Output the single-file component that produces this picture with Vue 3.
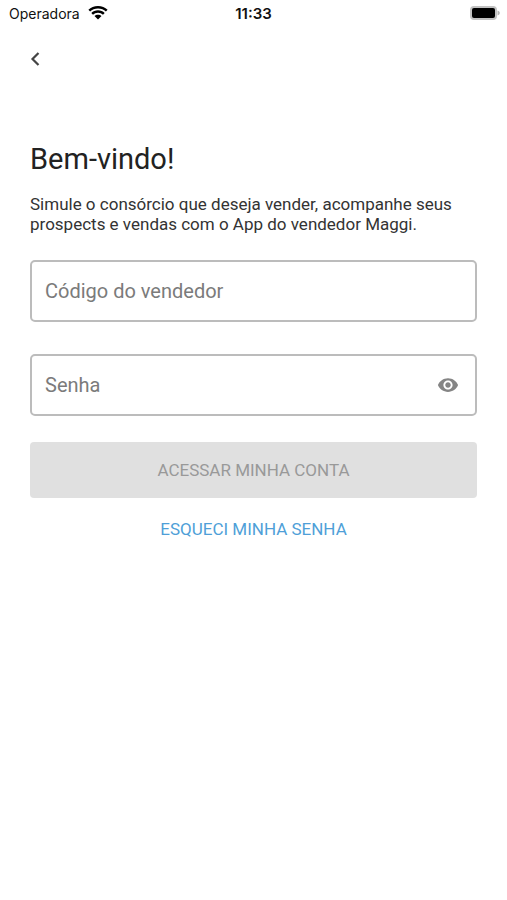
<script setup>
import { ref, computed } from 'vue'

const code = ref('')
const password = ref('')
const visible = ref(false)
const ready = computed(() => code.value !== '' && password.value !== '')
</script>

<template>
  <div class="screen">
    <header class="status">
      <div class="carrier">
        <span>Operadora</span>
        <svg class="wifi" viewBox="0 0 20 14" aria-hidden="true">
          <path d="M10 0C6.200 0 2.800 1.500.4 3.800l1.700 1.800C4.100 3.700 6.900 2.500 10 2.500s5.900 1.200 7.900 3.100l1.700-1.800C17.200 1.500 13.800 0 10 0z" />
          <path d="M10 4.300c-2.600 0-5 1-6.700 2.600L5 8.700c1.300-1.200 3.100-2 5-2s3.700.8 5 2l1.700-1.800C15 5.300 12.600 4.300 10 4.300z" />
          <path d="M10 8.700c-1.400 0-2.600.5-3.500 1.400L10 13.600l3.500-3.500c-.9-.9-2.100-1.400-3.500-1.400z" />
        </svg>
      </div>
      <time class="clock">11:33</time>
      <svg class="battery" viewBox="0 0 30 14" aria-hidden="true">
        <rect x="0" y="0" width="27" height="14" rx="4" fill="#c2c2c2" />
        <rect x="2" y="2" width="23" height="10" rx="2" fill="#000" />
        <path d="M27.500 4.500c3 .8 3 4.200 0 5z" fill="#b5b5b5" />
      </svg>
    </header>

    <nav class="nav">
      <button class="back" type="button" aria-label="Voltar">
        <svg viewBox="0 0 10 16" aria-hidden="true">
          <path d="M8.500 2 2.500 8l6 6" fill="none" stroke="#444" stroke-width="2.200" />
        </svg>
      </button>
    </nav>

    <main class="content">
      <h1>Bem-vindo!</h1>
      <p>Simule o consórcio que deseja vender, acompanhe seus prospects e vendas com o App do vendedor Maggi.</p>
      <form @submit.prevent>
        <div class="field">
          <input v-model="code" type="text" placeholder="Código do vendedor" aria-label="Código do vendedor" />
        </div>
        <div class="field">
          <input v-model="password" :type="visible ? 'text' : 'password'" placeholder="Senha" aria-label="Senha" />
          <button class="eye" type="button" aria-label="Mostrar senha" @click="visible = !visible">
            <svg viewBox="0 0 24 24" aria-hidden="true">
              <path d="M12 4.500C7 4.500 2.730 7.610 1 12c1.730 4.390 6 7.500 11 7.500s9.270-3.110 11-7.500c-1.730-4.390-6-7.500-11-7.500zM12 17c-2.760 0-5-2.240-5-5s2.240-5 5-5 5 2.240 5 5-2.240 5-5 5zm0-8c-1.660 0-3 1.340-3 3s1.340 3 3 3 3-1.340 3-3-1.340-3-3-3z" />
            </svg>
          </button>
        </div>
        <button class="submit" type="submit" :disabled="!ready">ACESSAR MINHA CONTA</button>
      </form>
      <a class="forgot" href="#">ESQUECI MINHA SENHA</a>
    </main>
  </div>
</template>

<style>
body {
  background: #fff;
}
</style>

<style scoped>
.screen {
  font-family: Roboto, sans-serif;
  color: #222;
}
.status {
  display: grid;
  grid-template-columns: 1fr auto 1fr;
  align-items: center;
  height: 26px;
  padding: 0 7px;
  font-family: Inter, sans-serif;
  color: #111;
}
.carrier {
  display: flex;
  align-items: center;
  gap: 8px;
  padding-left: 2px;
  font-size: 14px;
}
.wifi {
  width: 20px;
  height: 14px;
}
.clock {
  font-size: 15px;
  font-weight: 600;
}
.battery {
  justify-self: end;
  width: 30px;
  height: 14px;
}
.nav {
  display: flex;
  padding: 17px 22px 16px;
}
.back {
  display: flex;
  align-items: center;
  justify-content: center;
  width: 26px;
  height: 32px;
  padding: 0;
  border: 0;
  background: none;
}
.back svg {
  width: 10px;
  height: 16px;
}
.content {
  display: flex;
  flex-direction: column;
  padding: 48px 30px 0;
}
h1 {
  margin: 0;
  font-size: 29px;
  line-height: 40px;
  font-weight: 400;
}
p {
  margin: 15px 0 26px;
  font-size: 17px;
  line-height: 20px;
  color: #333;
}
form {
  display: flex;
  flex-direction: column;
}
.field {
  display: flex;
  align-items: center;
  height: 58px;
  margin-bottom: 32px;
  padding: 0 16px 0 13px;
  border: 2px solid #bcbcbc;
  border-radius: 5px;
}
.field + .field {
  margin-bottom: 26px;
}
input {
  flex: 1;
  min-width: 0;
  height: 100%;
  padding: 0;
  border: 0;
  outline: 0;
  background: none;
  font-family: inherit;
  font-size: 20px;
  color: #222;
}
input::placeholder {
  color: #7b7b7b;
  opacity: 1;
}
.eye {
  display: flex;
  padding: 0;
  border: 0;
  background: none;
}
.eye svg {
  width: 22px;
  height: 22px;
  fill: #858585;
}
.submit {
  height: 56px;
  border: 0;
  border-radius: 4px;
  background: #e0e0e0;
  font-family: inherit;
  font-size: 17px;
  color: #999;
}
.forgot {
  align-self: center;
  margin-top: 21px;
  font-size: 17px;
  line-height: 20px;
  color: #4f9fd8;
  text-decoration: none;
}
</style>
